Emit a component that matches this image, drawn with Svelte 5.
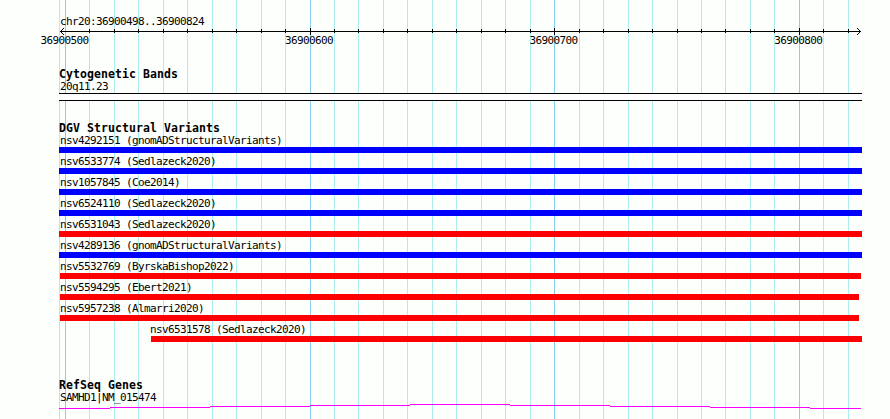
<script lang="ts">
	type Variant = { name: string; kind: 'gain' | 'loss'; start: number; end: number };

	// Left edge of the tracks in pixels
	const left = 59;

	// Grid line positions in pixels
	const major: number[] = [65, 310, 554, 799];
	const minor: number[] = [
		89, 114, 138, 163, 187, 212, 236, 261, 285, 334, 358, 383, 407, 432, 456, 481, 505, 530, 579,
		603, 628, 652, 677, 701, 725, 750, 774, 823, 848
	];

	const variants: Variant[] = [
		{ name: 'nsv4292151 (gnomADStructuralVariants)', kind: 'gain', start: 59, end: 862 },
		{ name: 'nsv6533774 (Sedlazeck2020)', kind: 'gain', start: 59, end: 862 },
		{ name: 'nsv1057845 (Coe2014)', kind: 'gain', start: 59, end: 862 },
		{ name: 'nsv6524110 (Sedlazeck2020)', kind: 'gain', start: 59, end: 862 },
		{ name: 'nsv6531043 (Sedlazeck2020)', kind: 'loss', start: 59, end: 862 },
		{ name: 'nsv4289136 (gnomADStructuralVariants)', kind: 'gain', start: 59, end: 862 },
		{ name: 'nsv5532769 (ByrskaBishop2022)', kind: 'loss', start: 60, end: 861 },
		{ name: 'nsv5594295 (Ebert2021)', kind: 'loss', start: 60, end: 859 },
		{ name: 'nsv5957238 (Almarri2020)', kind: 'loss', start: 60, end: 859 },
		{ name: 'nsv6531578 (Sedlazeck2020)', kind: 'loss', start: 151, end: 862 }
	];

	// Coordinates printed under the major ticks
	const labels: string[] = ['36900500', '36900600', '36900700', '36900800'];

	// The intron is drawn as flat steps
	const intron: number[][] = [
		[0, 51, 4],
		[51, 151, 3],
		[151, 251, 2],
		[251, 351, 1],
		[351, 451, 0],
		[451, 551, 1],
		[551, 651, 2],
		[651, 751, 3],
		[751, 802, 4]
	];

	// Labels never start left of the track margin
	function labelOffset(start: number) {
		return Math.max(start - 1, left + 1) - start;
	}
</script>

<div class="browser">
	<svg class="grid" width="890" height="419" shape-rendering="crispEdges">
		<rect class="minor" x={left} y="0" width="1" height="419" />
		{#each minor as x}
			<rect class="minor" {x} y="0" width="1" height="419" />
		{/each}
		{#each major as x}
			<rect class="major" {x} y="0" width="1" height="419" />
		{/each}
	</svg>

	<main>
		<section class="ruler">
			<div class="label">chr20:36900498..36900824</div>
			<svg class="axis" width="803" height="7" shape-rendering="crispEdges">
				<rect x="1" y="3" width="801" height="1" />
				<path
					d="M2 2h1v1h-1zM3 1h1v1h-1zM4 0h1v1h-1zM2 4h1v1h-1zM3 5h1v1h-1zM4 6h1v1h-1zM800 2h1v1h-1zM799 1h1v1h-1zM798 0h1v1h-1zM800 4h1v1h-1zM799 5h1v1h-1zM798 6h1v1h-1z"
				/>
				{#each minor as x}
					<rect x={x - left} y="1" width="1" height="4" />
				{/each}
				{#each major.slice(1) as x}
					<rect x={x - left} y="0" width="1" height="7" />
				{/each}
			</svg>
			<div class="coords">
				{#each labels as label}
					<span>{label}</span>
				{/each}
			</div>
		</section>

		<section class="cytoband">
			<h2>Cytogenetic Bands</h2>
			<div class="label">20q11.23</div>
			<div class="band"></div>
		</section>

		<section class="variants">
			<h2>DGV Structural Variants</h2>
			{#each variants as variant}
				<div class="variant" style:margin-left="{variant.start - left}px">
					<div class="name" style:margin-left="{labelOffset(variant.start)}px">{variant.name}</div>
					<div class="bar {variant.kind}" style:width="{variant.end - variant.start}px"></div>
				</div>
			{/each}
		</section>

		<section class="genes">
			<h2>RefSeq Genes</h2>
			<div class="label">SAMHD1|NM_015474</div>
			<svg class="gene" width="803" height="5" shape-rendering="crispEdges">
				{#each intron as [from, to, y]}
					<rect x={from} {y} width={to - from} height="1" />
				{/each}
			</svg>
		</section>
	</main>
</div>

<style>
	:global(body) {
		background: #fdfffc;
	}

	.browser {
		position: relative;
		width: 890px;
		height: 419px;
		overflow: hidden;
		color: black;
		font-family: 'DejaVu Sans Mono', 'Liberation Mono', monospace;
		font-size: 11px;
		line-height: 12px;
		letter-spacing: -0.623px;
		white-space: nowrap;
	}

	.grid {
		position: absolute;
		top: 0;
		left: 0;
	}

	.minor {
		fill: #afeeee;
	}

	.major {
		fill: #87ceeb;
	}

	main {
		position: relative;
		display: flex;
		flex-direction: column;
		padding: 15px 0 0 59px;
	}

	svg {
		display: block;
	}

	h2 {
		margin: 0;
		height: 12px;
		font-size: 11.5px;
		line-height: 12px;
		letter-spacing: 0.077px;
	}

	.label,
	.name {
		height: 12px;
	}

	.label {
		padding-left: 1px;
		line-height: 14px;
	}

	.ruler {
		height: 53px;
	}

	.axis {
		margin-top: 1px;
	}

	.coords {
		display: flex;
		gap: 196.6px;
		margin-left: -18.6px;
	}

	.coords span {
		width: 48px;
	}

	.cytoband {
		height: 54px;
	}

	.band {
		width: 803px;
		height: 6px;
		margin-top: 1px;
		background: white;
		border-top: 1px solid black;
		border-bottom: 1px solid black;
	}

	.variants {
		height: 257px;
	}

	.variants h2 {
		margin-bottom: 1px;
	}

	.variant {
		height: 21px;
	}

	.bar {
		height: 6px;
	}

	.gain {
		background: blue;
	}

	.loss {
		background: red;
	}

	.gene {
		margin-top: 1px;
		fill: magenta;
	}
</style>
